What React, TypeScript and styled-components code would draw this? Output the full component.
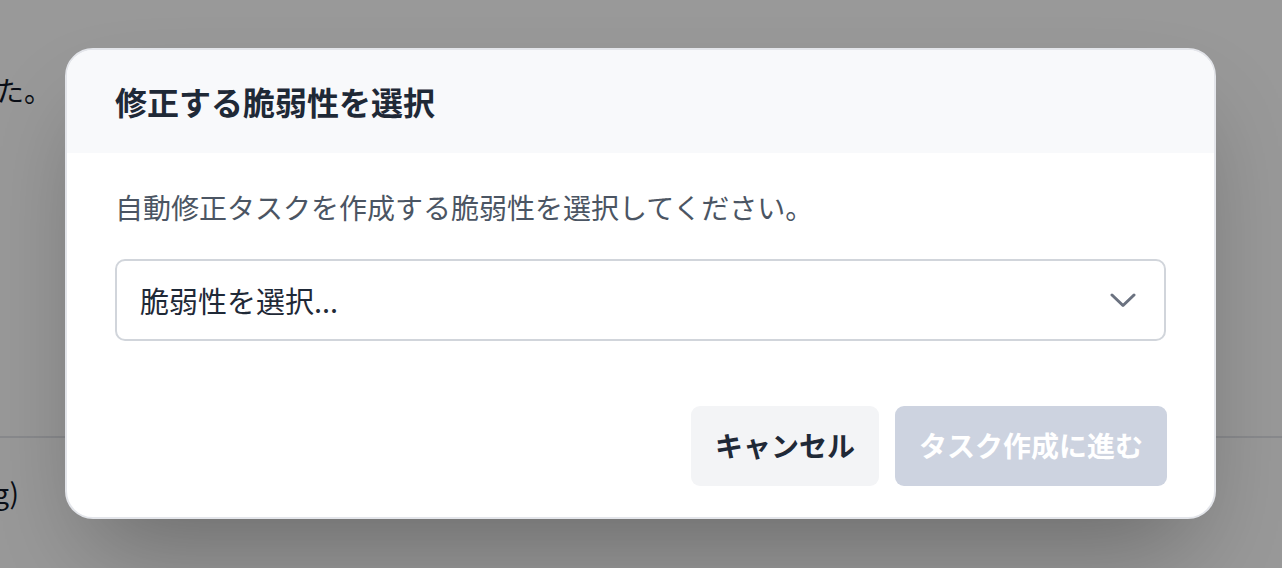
import React from 'react';
import styled, { createGlobalStyle } from 'styled-components';

const GlobalStyle = createGlobalStyle`
  html, body {
    margin: 0;
    padding: 0;
    background: #ffffff;
  }
  body {
    font-family: "Noto Sans CJK JP", "Noto Sans", "Liberation Sans", sans-serif;
    color: #1f2937;
  }
  * {
    box-sizing: border-box;
  }
`;

const Page = styled.div`
  position: relative;
  width: 1282px;
  height: 568px;
  overflow: hidden;
  background: #ffffff;
`;

const PageContent = styled.div`
  display: flex;
  flex-direction: column;
  padding-top: 70px;
`;

const ClippedLine = styled.div<{ $width: number }>`
  display: flex;
  justify-content: flex-end;
  width: ${({ $width }) => $width}px;
  overflow: hidden;
  white-space: nowrap;
  font-size: 28px;
  line-height: 40px;
  color: #111827;
`;

const Divider = styled.hr`
  margin: 326px 0 0;
  border: 0;
  border-top: 2px solid #e5e7eb;
`;

const LowerLine = styled(ClippedLine)`
  margin-top: 34px;
`;

const Overlay = styled.div`
  position: absolute;
  inset: 0;
  background: rgba(0, 0, 0, 0.4);
  display: flex;
  align-items: flex-start;
  justify-content: flex-start;
  padding: 48px 0 0 65px;
`;

const Modal = styled.div`
  width: 1151px;
  background: #ffffff;
  border: 2px solid #e3e5ea;
  border-radius: 28px;
  overflow: hidden;
  box-shadow: 0 50px 100px -24px rgba(0, 0, 0, 0.3);
`;

const Header = styled.div`
  background: #f8f9fb;
  padding: 30px 48px;
`;

const Title = styled.h2`
  margin: 0;
  font-size: 32px;
  line-height: 43px;
  font-weight: 700;
  color: #1f2937;
`;

const Body = styled.div`
  padding: 34px 48px 0;
  display: flex;
  flex-direction: column;
  gap: 32px;
`;

const Description = styled.p`
  margin: 0;
  font-size: 28px;
  line-height: 40px;
  color: #4b5563;
`;

const SelectBox = styled.div`
  height: 82px;
  border: 2px solid #d1d5db;
  border-radius: 10px;
  display: flex;
  align-items: center;
  justify-content: space-between;
  padding: 0 28px 0 23px;
  background: #ffffff;
`;

const Placeholder = styled.span`
  font-size: 29px;
  line-height: 40px;
  color: #1f2937;
`;

const Chevron = () => (
  <svg width="26" height="16" viewBox="0 0 26 16" fill="none">
    <polyline
      points="2,3 13,13.5 24,3"
      stroke="#6b7280"
      strokeWidth="3"
      strokeLinecap="round"
      strokeLinejoin="round"
    />
  </svg>
);

const Footer = styled.div`
  display: flex;
  justify-content: flex-end;
  gap: 16px;
  padding: 65px 47px 31px;
`;

const Button = styled.button<{ $primary?: boolean }>`
  height: 80px;
  padding: 0 24px 3px;
  border: 0;
  border-radius: 9px;
  font-family: inherit;
  font-size: 28px;
  font-weight: 700;
  line-height: 40px;
  background: ${({ $primary }) => ($primary ? '#cdd3e0' : '#f3f4f6')};
  color: ${({ $primary }) => ($primary ? '#ffffff' : '#1f2937')};
  cursor: ${({ $primary }) => ($primary ? 'not-allowed' : 'pointer')};
`;

export default function App() {
  return (
    <Page>
      <GlobalStyle />
      <PageContent>
        <ClippedLine $width={52}>スキャンが完了しました。</ClippedLine>
        <Divider />
        <LowerLine $width={19}>(Logging)</LowerLine>
      </PageContent>
      <Overlay>
        <Modal>
          <Header>
            <Title>修正する脆弱性を選択</Title>
          </Header>
          <Body>
            <Description>自動修正タスクを作成する脆弱性を選択してください。</Description>
            <SelectBox>
              <Placeholder>脆弱性を選択...</Placeholder>
              <Chevron />
            </SelectBox>
          </Body>
          <Footer>
            <Button>キャンセル</Button>
            <Button $primary disabled>
              タスク作成に進む
            </Button>
          </Footer>
        </Modal>
      </Overlay>
    </Page>
  );
}
